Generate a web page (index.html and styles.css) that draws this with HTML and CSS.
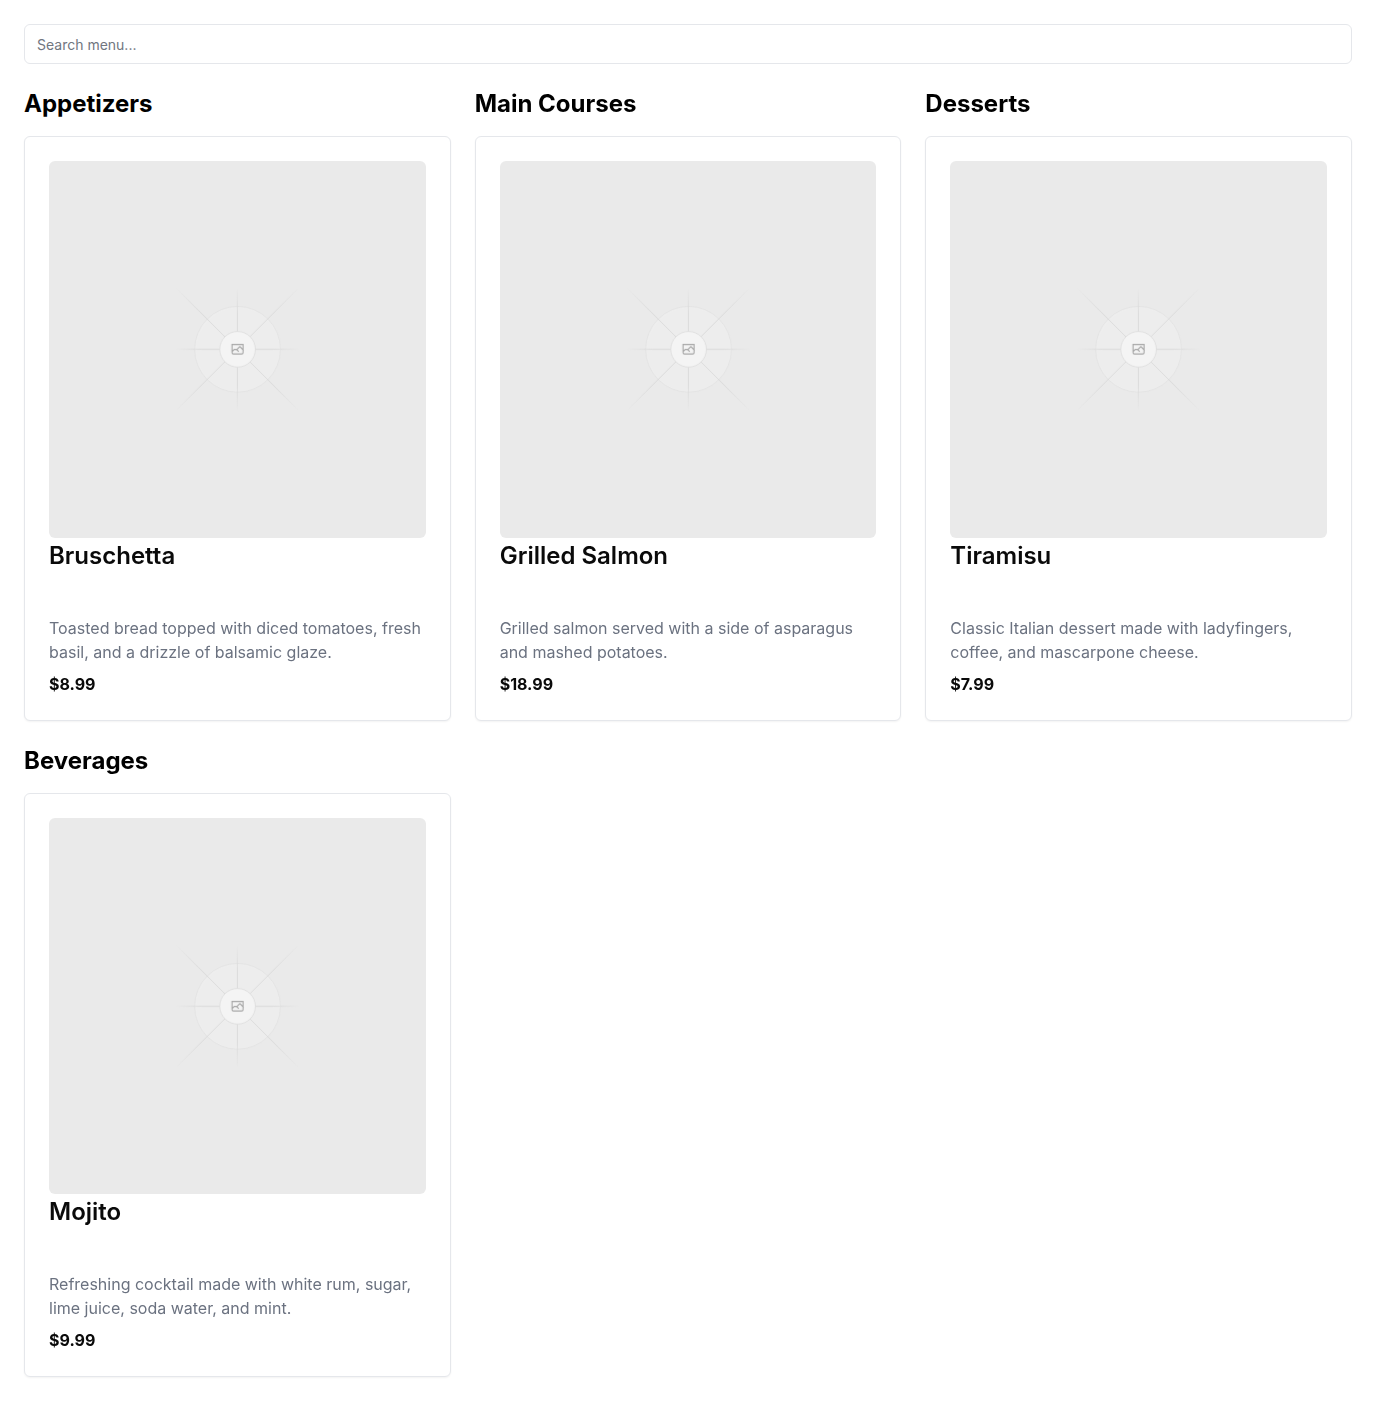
FILE: index.html
```html
<!DOCTYPE html>
<html lang="en">
<head>
<meta charset="utf-8">
<meta name="viewport" content="width=device-width, initial-scale=1">
<title>Menu</title>
<link rel="stylesheet" href="styles.css">
</head>
<body>
<svg class="defs" width="0" height="0" aria-hidden="true">
  <defs>
    <linearGradient id="ray-fade" gradientUnits="userSpaceOnUse" x1="404" y1="600" x2="797" y2="600">
      <stop offset="0" stop-color="#c9c9c9" stop-opacity="0"/>
      <stop offset=".208" stop-color="#c9c9c9"/>
      <stop offset=".792" stop-color="#c9c9c9"/>
      <stop offset="1" stop-color="#c9c9c9" stop-opacity="0"/>
    </linearGradient>
    <linearGradient id="diagonal-fade" gradientUnits="userSpaceOnUse" x1="323" y1="600" x2="877" y2="600">
      <stop offset="0" stop-color="#c9c9c9" stop-opacity="0"/>
      <stop offset=".208" stop-color="#c9c9c9"/>
      <stop offset=".792" stop-color="#c9c9c9"/>
      <stop offset="1" stop-color="#c9c9c9" stop-opacity="0"/>
    </linearGradient>
  </defs>
  <symbol id="placeholder" viewBox="0 0 1200 1200">
    <g opacity=".5">
      <circle cx="600.7" cy="599.9" r="136.6" fill="#fafafa" stroke="#c9c9c9" stroke-width="2.418" opacity=".5"/>
      <g fill="none" stroke-width="3">
        <path stroke="url(#ray-fade)" d="M404 599.9H797"/>
        <path stroke="url(#ray-fade)" d="M404 599.9H797" transform="rotate(90 600 600)"/>
        <path stroke="url(#diagonal-fade)" d="M323 599.9H877" transform="rotate(45 600 600)"/>
        <path stroke="url(#diagonal-fade)" d="M323 599.9H877" transform="rotate(-45 600 600)"/>
      </g>
      <circle cx="600.7" cy="599.9" r="56.8" fill="#fff" stroke="#c9c9c9" stroke-width="2.418"/>
      <path fill="#666" fill-rule="evenodd" clip-rule="evenodd" d="M616.426 586.58h-31.434v16.176l3.553-3.554.531-.531h9.068l.074-.074 8.463-8.463h2.565l7.18 7.181V586.58Zm-15.715 14.654 3.698 3.699 1.283 1.282-2.565 2.565-1.282-1.283-5.2-5.199h-6.066l-5.514 5.514-.073.073v2.876a2.418 2.418 0 0 0 2.418 2.418h26.598a2.418 2.418 0 0 0 2.418-2.418v-8.317l-8.463-8.463-7.181 7.181-.071.072Zm-19.347 5.442v4.085a6.045 6.045 0 0 0 6.046 6.045h26.598a6.044 6.044 0 0 0 6.045-6.045v-7.108l1.356-1.355-1.282-1.283-.074-.073v-17.989h-38.689v23.43l-.146.146.146.147Z"/>
    </g>
  </symbol>
</svg>
<main class="page">
  <input class="search" type="search" placeholder="Search menu..." aria-label="Search menu">
  <div class="menu">
    <section class="category">
      <h2 class="category-title">Appetizers</h2>
      <article class="card">
        <svg class="photo" role="img" aria-label="Bruschetta"><use href="#placeholder"/></svg>
        <h3 class="dish">Bruschetta</h3>
        <p class="description">Toasted bread topped with diced tomatoes, fresh basil, and a drizzle of balsamic glaze.</p>
        <p class="price">$8.99</p>
      </article>
    </section>
    <section class="category">
      <h2 class="category-title">Main Courses</h2>
      <article class="card">
        <svg class="photo" role="img" aria-label="Grilled Salmon"><use href="#placeholder"/></svg>
        <h3 class="dish">Grilled Salmon</h3>
        <p class="description">Grilled salmon served with a side of asparagus and mashed potatoes.</p>
        <p class="price">$18.99</p>
      </article>
    </section>
    <section class="category">
      <h2 class="category-title">Desserts</h2>
      <article class="card">
        <svg class="photo" role="img" aria-label="Tiramisu"><use href="#placeholder"/></svg>
        <h3 class="dish">Tiramisu</h3>
        <p class="description">Classic Italian dessert made with ladyfingers, coffee, and mascarpone cheese.</p>
        <p class="price">$7.99</p>
      </article>
    </section>
    <section class="category">
      <h2 class="category-title">Beverages</h2>
      <article class="card">
        <svg class="photo" role="img" aria-label="Mojito"><use href="#placeholder"/></svg>
        <h3 class="dish">Mojito</h3>
        <p class="description">Refreshing cocktail made with white rum, sugar, lime juice, soda water, and mint.</p>
        <p class="price">$9.99</p>
      </article>
    </section>
  </div>
</main>
</body>
</html>
```
FILE: styles.css
```css
*,
*::before,
*::after {
  box-sizing: border-box;
}

body {
  margin: 0;
  background: #fff;
  color: #000;
  font-family: Inter, "Liberation Sans", sans-serif;
  font-size: 16px;
  line-height: 24px;
}

h2,
h3,
p {
  margin: 0;
}

.defs {
  display: block;
}

.page {
  display: flex;
  flex-direction: column;
  gap: 24px;
  padding: 24px;
}

.search {
  appearance: none;
  width: 100%;
  height: 40px;
  margin: 0;
  padding: 8px 12px;
  border: 1px solid #e5e7eb;
  border-radius: 6px;
  background: #fff;
  color: #0a0a0a;
  font: inherit;
  font-size: 14px;
  line-height: 20px;
}

.search::placeholder {
  color: #71767f;
  opacity: 1;
}

.menu {
  display: grid;
  grid-template-columns: repeat(3, minmax(0, 1fr));
  gap: 24px;
}

.category {
  display: flex;
  flex-direction: column;
  gap: 16px;
}

.category-title {
  font-size: 24px;
  line-height: 32px;
  font-weight: 700;
}

.card {
  padding: 24px;
  border: 1px solid #e5e7eb;
  border-radius: 6px;
  background: #fff;
  box-shadow: 0 1px 2px rgba(0, 0, 0, 0.05);
  color: #0a0a0a;
}

.photo {
  display: block;
  width: 100%;
  aspect-ratio: 1;
  border-radius: 6px;
  background: #eaeaea;
}

.dish {
  padding: 6px 0 48px;
  font-size: 24px;
  line-height: 24px;
  font-weight: 600;
}

.description {
  color: #6b7280;
}

.price {
  padding-top: 8px;
  font-weight: 700;
}

@media (max-width: 900px) {
  .menu {
    grid-template-columns: repeat(2, minmax(0, 1fr));
  }
}

@media (max-width: 600px) {
  .menu {
    grid-template-columns: minmax(0, 1fr);
  }
}
```
